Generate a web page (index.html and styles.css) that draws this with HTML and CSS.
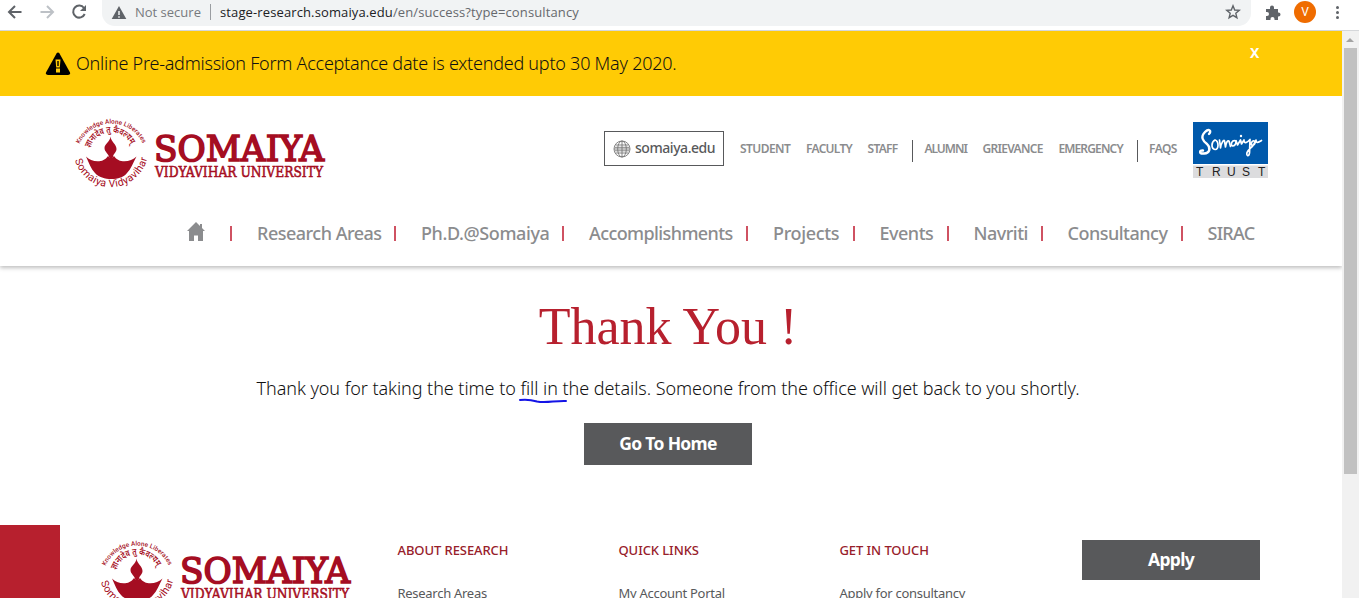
FILE: index.html
```html
<!DOCTYPE html>
<html lang="en">
<head>
<meta charset="utf-8">
<title>Somaiya Vidyavihar University</title>
<link rel="stylesheet" href="styles.css">
</head>
<body>
<svg class="defs" width="0" height="0">
  <symbol id="logo" viewBox="0 0 250 76">
    <path id="arc-top" d="M4.500 27A34.900 34.900 0 0 1 68.500 28" fill="none"/>
    <path id="arc-mid" d="M15 31A22 22 0 0 1 57 31" fill="none"/>
    <path id="arc-low" d="M0 43A37.300 37.300 0 0 0 72.500 40" fill="none"/>
    <g fill="#a50d22">
      <text class="arc-tiny"><textPath href="#arc-top" textLength="79">Knowledge Alone Liberates</textPath></text>
      <text class="arc-hindi"><textPath href="#arc-mid" textLength="52" lengthAdjust="spacingAndGlyphs">ज्ञानादेव तु कैवल्यम्</textPath></text>
      <text class="arc-name"><textPath href="#arc-low" textLength="98">Somaiya Vidyavihar</textPath></text>
      <path d="M35.500 19.500C36 25 41.500 27 41.500 32C41.500 35.500 38 37 38 40L36 43L34 40C34 37 29.500 35 29.500 31C29.500 27 35 25 35.500 19.500Z"/>
      <path d="M11 39.500C16 45 28 47 33 39Q36 43 39 39C44 47 56 45 61.500 39.500C58 46 56 52 52 56C46 64 27 64 20 56C16 52 14 46 11 39.500Z"/>
      <text class="logo-big" x="79" y="43.500" textLength="170" lengthAdjust="spacingAndGlyphs">SOMAIYA</text>
      <text class="logo-small" x="80" y="60" textLength="168" lengthAdjust="spacingAndGlyphs">VIDYAVIHAR UNIVERSITY</text>
    </g>
  </symbol>
</svg>

<div class="toolbar">
  <svg class="nav-icons" width="100" height="30" viewBox="0 0 100 30" fill="none" stroke-width="2">
    <path d="M21.500 12H9M15 6L9 12L15 18" stroke="#5f6368"/>
    <path d="M40.500 12H53M47 6L53 12L47 18" stroke="#bdc1c6"/>
    <path d="M84 8A6 6 0 1 0 84.700 14" stroke="#5f6368"/>
    <path d="M86 5V11H80Z" fill="#5f6368"/>
  </svg>
  <div class="omnibox">
    <svg width="16" height="15" viewBox="0 0 16 15"><path d="M8 1L15.300 14H.7Z" fill="#5f6368"/><path d="M8 6V10M8 11.200V12.800" stroke="#f1f3f4" stroke-width="1.500"/></svg>
    <span class="insecure">Not secure</span>
    <span class="divider"></span>
    <span class="url"><b>stage-research.somaiya.edu</b>/en/success?type=consultancy</span>
    <svg class="star" width="16" height="16" viewBox="0 0 16 16"><path d="M8 1.800L9.700 6L14.300 6.300L10.800 9.300L11.900 13.700L8 11.300L4.100 13.700L5.200 9.300L1.700 6.300L6.300 6Z" fill="none" stroke="#5f6368" stroke-width="1.400"/></svg>
  </div>
  <svg class="puzzle" width="16" height="16" viewBox="0 0 16 16"><path d="M1 4H5V2.500A2 2 0 0 1 9 2.500V4H13V7.500H13.500A2 2 0 0 1 13.500 11.500H13V15H9.500V14A2 2 0 0 0 5.500 14V15H1V11H2A2 2 0 0 0 2 7H1Z" fill="#5f6368"/></svg>
  <span class="avatar">V</span>
  <span class="kebab"><i></i><i></i><i></i></span>
</div>

<div class="viewport">
  <main class="page">
    <div class="notice">
      <svg width="26" height="24" viewBox="0 0 26 24"><path d="M11.500 1.500Q13 -.5 14.500 1.500L25 20.500Q25.500 23 23 23H3Q.5 23 1 20.500Z"/><path d="M10.500 7.500H15.500L14.800 15.500H11.200ZM11 16.500H15V20.500H11Z" fill="#ffcb05"/><path d="M12.300 9H13.700V14H12.300Z"/></svg>
      <span class="notice-text">Online Pre-admission Form Acceptance date is extended upto 30 May 2020.</span>
      <span class="close">X</span>
    </div>
    <header class="header">
      <div class="top-row">
        <svg class="logo" width="250" height="76"><use href="#logo"/></svg>
        <a class="site-link">
          <svg width="18" height="18" viewBox="0 0 18 18" fill="none" stroke="#777" stroke-width=".9"><circle cx="9" cy="9" r="8"/><ellipse cx="9" cy="9" rx="4.300" ry="8"/><path d="M9 1V17M1 9H17M2.500 5H15.500M2.500 13H15.500M2 7.300H16M2 10.800H16"/></svg>
          <span>somaiya.edu</span>
        </a>
        <ul class="utility">
          <li class="u50">STUDENT</li><li class="u46">FACULTY</li><li class="u32">STAFF</li>
          <li class="bar"></li>
          <li class="u42">ALUMNI</li><li class="u60">GRIEVANCE</li><li class="u65">EMERGENCY</li>
          <li class="bar"></li>
          <li class="u28">FAQS</li>
        </ul>
        <svg class="trust" width="75" height="56" viewBox="0 0 75 56">
          <path d="M0 0H75V42H0Z" fill="#0059ab"/><path d="M0 43.500H75V56H0Z" fill="#dcdcde"/>
          <g fill="none" stroke="#fff" stroke-width="1.700" stroke-linecap="round" stroke-linejoin="round">
            <path stroke-width="2.400" d="M16 12C19 9 16 6 12 10C7 15 10 19 14 22C18 26 17 31 11 31.500C6 32 6 28 10 28.500"/>
            <path d="M22 18C18 20 18 27 22 27.500C26 28 26 19 22 18M26.500 18L27.500 26C28 21 31 17 31.500 19L32.500 25C33 20 35 18 36 19L37.500 24.500"/>
            <path d="M43 19C39 17 37 23 39.500 24C42 24 43 21 43 18.500L44.500 23L47.500 18L48.500 22L51 18C51 22 54 21 57 17.500L56.500 31C56 35 53 34 54 30.500C55 27 61 25 62 19.500C59 17 57 23 59.500 23.500C62 23 62.500 20 63 18C63 22 66 20 68.500 18.500"/>
          </g>
          <circle cx="48" cy="14" r="1.200" fill="#fff"/>
          <g class="trust-text"><text x="3" y="54.300">T</text><text x="19" y="54.300">R</text><text x="34" y="54.300">U</text><text x="49" y="54.300">S</text><text x="65" y="54.300">T</text></g>
        </svg>
      </div>
      <nav class="main-nav">
        <svg class="home" width="18" height="19" viewBox="0 0 18 19"><path d="M9 0L13 4V2H15V6L18 9H16V19H11V13.500H7V19H2V9H0Z" fill="#8b8c8e"/></svg>
        <a class="n124">Research Areas</a><a class="n128">Ph.D.@Somaiya</a><a class="n144">Accomplishments</a><a class="n66">Projects</a><a class="n54">Events</a><a class="n54">Navriti</a><a class="n100">Consultancy</a><a class="n47">SIRAC</a>
      </nav>
    </header>
    <section class="thanks">
      <h1>Thank You !</h1>
      <p>Thank you for taking the time to <span class="marked">fill in<svg width="48" height="6" viewBox="0 0 48 6"><path d="M1 2C9 1 13 2 18 3.500C27 5.500 36 2.500 47 3" fill="none" stroke="#1414e6" stroke-width="2" stroke-linecap="round"/></svg></span> the details. Someone from the office will get back to you shortly.</p>
      <a class="button go-home">Go To Home</a>
    </section>
    <footer class="footer">
      <div class="accent"></div>
      <svg class="footer-logo" width="250" height="76"><use href="#logo"/></svg>
      <div class="col c1"><h2>ABOUT RESEARCH</h2><a>Research Areas</a></div>
      <div class="col c2"><h2>QUICK LINKS</h2><a>My Account Portal</a></div>
      <div class="col c3"><h2>GET IN TOUCH</h2><a>Apply for consultancy</a></div>
      <a class="button apply">Apply</a>
    </footer>
  </main>
  <div class="scrollbar"><span class="arrow"></span><span class="thumb"></span></div>
</div>
</body>
</html>
```
FILE: styles.css
```css
* { box-sizing: border-box; }
body { margin: 0; height: 598px; overflow: hidden; background: #fff; font-family: "Noto Sans", sans-serif; }
.defs { display: block; height: 0; }
h1, h2, p, ul { margin: 0; padding: 0; font-weight: 400; }

/* browser toolbar */
.toolbar { display: flex; height: 31px; border-bottom: 1px solid #d5d7da; }
.nav-icons { flex: none; }
.omnibox { display: flex; align-items: center; width: 1149px; height: 26px; margin-left: 2px; padding: 0 10px 2px 9px; background: #f1f3f4; border-radius: 0 0 13px 13px; font-family: "Open Sans", sans-serif; font-size: 13px; white-space: nowrap; }
.insecure { width: 67px; margin-left: 8px; color: #777a7e; }
.divider { width: 1px; height: 16px; margin: 0 9px 0 8px; background: #9a9da1; }
.url { color: #66696d; letter-spacing: .12px; }
.url b { color: #202124; font-weight: 400; }
.star { margin-left: auto; }
.puzzle { margin: 5px 0 0 14px; }
.avatar { width: 22px; height: 22px; margin: 1px 0 0 13px; border-radius: 50%; background: #ef6c00; color: #fff; font: 12px/22px Roboto, sans-serif; text-align: center; }
.kebab { display: flex; flex-direction: column; gap: 2px; margin: 6px 0 0 20px; }
.kebab i { width: 3px; height: 3px; border-radius: 50%; background: #5f6368; }

.viewport { display: flex; height: 567px; }
.page { width: 1342px; overflow: hidden; }
.scrollbar { width: 17px; padding: 7px 2px 0; background: #f1f1f1; }
.arrow { display: block; width: 8px; height: 4px; margin-left: 2px; background: #a3a3a3; clip-path: polygon(50% 0, 100% 100%, 0 100%); }
.thumb { display: block; width: 13px; height: 426px; margin-top: 6px; background: #c1c1c1; }

.notice { position: relative; z-index: 1; display: flex; height: 65px; padding-left: 45px; background: #ffcb05; color: #111; }
.notice svg { margin-top: 21px; }
.notice-text { width: 1174px; margin: 19px 0 0 5px; font-size: 18px; font-weight: 300; line-height: 27px; letter-spacing: -.24px; white-space: nowrap; }
.close { margin-top: 12px; color: #fff; font-size: 14px; font-weight: 700; line-height: 20px; }

.header { height: 170px; padding: 21px 0 0 75px; box-shadow: 0 2px 4px rgba(0,0,0,.25); }
.top-row { display: flex; height: 94px; }
.logo, .footer-logo, symbol { overflow: visible; }
.arc-tiny { font: 500 6.3px Roboto, sans-serif; }
.arc-hindi { font: 600 9px "Noto Sans", sans-serif; }
.arc-name { font: 400 10.5px Roboto, sans-serif; }
.logo-big { font: 400 36px "DejaVu Serif", serif; stroke: #a50d22; stroke-width: 1.7px; }
.logo-small { font: 400 15px "DejaVu Serif", serif; stroke: #a50d22; stroke-width: .6px; }
.site-link { display: flex; align-items: center; width: 120px; height: 35px; margin: 14px 0 0 279px; padding-left: 8px; border: 1px solid #58595b; color: #58595b; font-size: 14px; font-weight: 500; letter-spacing: -.45px; }
.site-link span { margin: -2px 0 0 4px; }
.utility { display: flex; gap: 16px; width: 437px; margin: 22px 0 0 16px; list-style: none; color: #8b8c8e; font-size: 12px; font-weight: 600; line-height: 20px; letter-spacing: -.7px; white-space: nowrap; }
.u50 { width: 50px; letter-spacing: -.55px; } .u46 { width: 45.5px; } .u32 { width: 31px; } .u42 { width: 42px; letter-spacing: -1px; }
.u60 { width: 60px; } .u65 { width: 65px; letter-spacing: -.85px; } .u28 { width: 28px; letter-spacing: -.6px; }
.bar { width: 1px; height: 22px; margin: 1px -5px 0 -2px; background: #58595b; }
.trust { margin: 5px 0 0 16px; }
.trust-text { font: 12px "Liberation Sans", sans-serif; fill: #222; }
.main-nav { display: flex; height: 30px; padding-left: 112px; color: #8b8c8e; font-size: 18px; font-weight: 500; line-height: 44px; letter-spacing: -.5px; white-space: nowrap; }
.main-nav a { display: flex; margin-left: 40px; position: relative; }
.main-nav a::before { content: ""; position: absolute; left: -27px; top: 15px; width: 2px; height: 15px; background: #cf5262; }
.home { margin: 11px 12px 0 0; }
.n124 { width: 124px; } .n128 { width: 128px; letter-spacing: -.4px; } .n144 { width: 144px; letter-spacing: -.6px; } .n66 { width: 66.5px; letter-spacing: -.35px; }
.n54 { width: 54px; } .n100 { width: 100px; } .n47 { width: 47px; letter-spacing: -.7px; }

.thanks { display: flex; flex-direction: column; align-items: center; height: 259px; padding: 30px 6px 0 0; }
.thanks h1 { color: #b7202e; font: 52px/60px "Liberation Serif", serif; white-space: nowrap; padding-top: 1px; height: 60px; }
.thanks p { margin-top: 18px; color: #111; font-size: 18px; font-weight: 300; line-height: 28px; letter-spacing: -.05px; white-space: nowrap; }
.marked { position: relative; }
.marked svg { position: absolute; left: -1px; top: 22px; }
.button { display: block; background: #58595b; color: #fff; font-size: 17.5px; font-weight: 700; letter-spacing: -.7px; text-align: center; }
.go-home { width: 168px; height: 42px; margin-top: 21px; line-height: 41px; }

.footer { display: flex; height: 73px; }
.accent { width: 60px; height: 73px; background: #b7202e; }
.footer-logo { flex: none; margin: 14px 0 0 41px; }
.col { width: 221px; margin-top: 16px; white-space: nowrap; }
.c1 { margin-left: 46.500px; }
.col h2 { height: 40px; color: #97202a; font-size: 13px; font-weight: 500; line-height: 18px; letter-spacing: -.08px; }
.col a { display: block; color: #58595b; font-size: 13px; line-height: 24px; letter-spacing: -.28px; }
.apply { width: 178px; height: 40px; margin: 15px 0 0 21.500px; line-height: 39px; }
```
